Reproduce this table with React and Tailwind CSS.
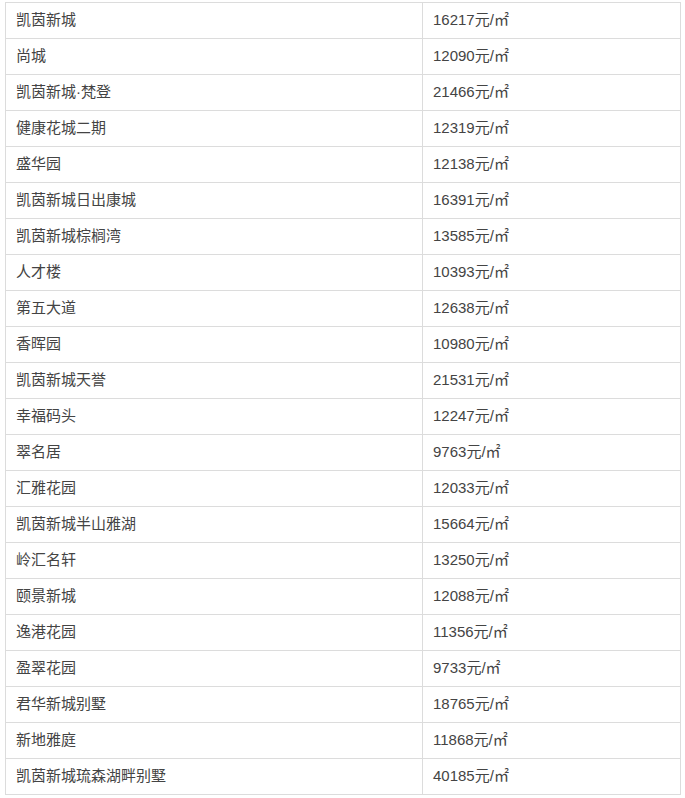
const rows = [
  ["凯茵新城", "16217"],
  ["尚城", "12090"],
  ["凯茵新城·梵登", "21466"],
  ["健康花城二期", "12319"],
  ["盛华园", "12138"],
  ["凯茵新城日出康城", "16391"],
  ["凯茵新城棕榈湾", "13585"],
  ["人才楼", "10393"],
  ["第五大道", "12638"],
  ["香晖园", "10980"],
  ["凯茵新城天誉", "21531"],
  ["幸福码头", "12247"],
  ["翠名居", "9763"],
  ["汇雅花园", "12033"],
  ["凯茵新城半山雅湖", "15664"],
  ["岭汇名轩", "13250"],
  ["颐景新城", "12088"],
  ["逸港花园", "11356"],
  ["盈翠花园", "9733"],
  ["君华新城别墅", "18765"],
  ["新地雅庭", "11868"],
  ["凯茵新城琉森湖畔别墅", "40185"],
];

export default function App() {
  return (
    <div className="min-h-screen bg-white pl-[5px] pt-[2px] pr-[4px] font-['Liberation_Sans','Noto_Sans_CJK_SC',sans-serif] text-[15px] text-[#444]">
      <table className="w-[676px] border-collapse">
        <tbody>
          {rows.map(([name, price]) => (
            <tr key={name} className="h-[36px]">
              <td className="w-[417px] border border-[#dcdcdc] px-[10px] py-0 align-middle">{name}</td>
              <td className="border border-[#dcdcdc] px-[10px] py-0 align-middle">
                {price}元/㎡
              </td>
            </tr>
          ))}
        </tbody>
      </table>
    </div>
  );
}
